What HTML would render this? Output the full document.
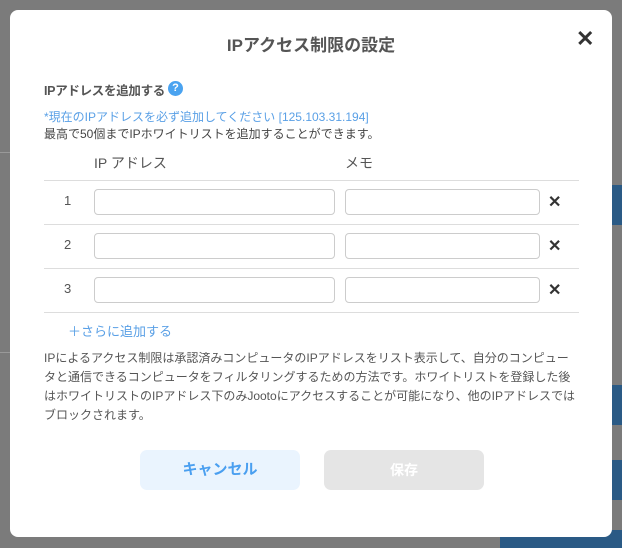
<!DOCTYPE html><html><head><meta charset="utf-8"><style>
body{margin:0;width:622px;height:548px;background:#7b7b7b;position:relative;overflow:hidden;font-family:"Liberation Sans","Noto Sans CJK JP",sans-serif;}
.a{position:absolute}
.m{left:10px;top:10px;width:602px;height:527px;background:#fff;border-radius:8px}
.t{font-size:13px;color:#555}
.line{left:44px;width:535px;height:1px;background:#ddd}
.in{height:24px;border:1px solid #ccc;border-radius:4px;background:#fff}
.x{font-size:16px;color:#333;font-weight:bold}
</style></head><body>
<div class="a" style="left:612px;top:185px;width:10px;height:40px;background:#2a5a85"></div>
<div class="a" style="left:612px;top:385px;width:10px;height:40px;background:#2a5a85"></div>
<div class="a" style="left:612px;top:460px;width:10px;height:40px;background:#2a5a85"></div>
<div class="a" style="left:500px;top:530px;width:122px;height:18px;background:#2a5a85"></div>
<div class="a" style="left:0;top:152px;width:10px;height:1px;background:#999"></div>
<div class="a" style="left:0;top:352px;width:10px;height:1px;background:#999"></div>
<div class="a m"></div>
<div class="a" style="left:0;top:31px;width:622px;text-align:center;font-size:17px;font-weight:bold;color:#555">IPアクセス制限の設定</div>
<div class="a" style="left:576px;top:26px;font-size:22px;color:#333;font-weight:bold">✕</div>
<div class="a t" style="left:44px;top:80px;font-weight:bold;font-size:12.5px;letter-spacing:-0.3px">IPアドレスを追加する</div>
<div class="a" style="left:168px;top:81px;width:15px;height:15px;border-radius:50%;background:#4aa3f0;color:#fff;font-size:11px;font-weight:bold;text-align:center;line-height:15px">?</div>
<div class="a" style="left:44px;top:108px;font-size:12px;color:#5aa0e6">*現在のIPアドレスを必ず追加してください [125.103.31.194]</div>
<div class="a" style="left:44px;top:125px;font-size:12px;color:#444">最高で50個までIPホワイトリストを追加することができます。</div>
<div class="a t" style="left:94px;top:153px;font-size:14px">IP アドレス</div>
<div class="a t" style="left:345px;top:153px;font-size:14px">メモ</div>
<div class="a line" style="top:180px"></div>
<div class="a line" style="top:224px"></div>
<div class="a line" style="top:268px"></div>
<div class="a line" style="top:312px"></div>
<div class="a t" style="left:64px;top:193px">1</div>
<div class="a t" style="left:64px;top:237px">2</div>
<div class="a t" style="left:64px;top:281px">3</div>
<div class="a in" style="left:94px;top:189px;width:239px"></div>
<div class="a in" style="left:345px;top:189px;width:193px"></div>
<div class="a in" style="left:94px;top:233px;width:239px"></div>
<div class="a in" style="left:345px;top:233px;width:193px"></div>
<div class="a in" style="left:94px;top:277px;width:239px"></div>
<div class="a in" style="left:345px;top:277px;width:193px"></div>
<div class="a x" style="left:548px;top:192px">✕</div>
<div class="a x" style="left:548px;top:236px">✕</div>
<div class="a x" style="left:548px;top:280px">✕</div>
<div class="a" style="left:68px;top:321px;font-size:13px;color:#5aa0e6">＋さらに追加する</div>
<div class="a" style="left:44px;top:349px;white-space:nowrap;font-size:12px;line-height:19px;color:#555">IPによるアクセス制限は承認済みコンピュータのIPアドレスをリスト表示して、自分のコンピュー<br>タと通信できるコンピュータをフィルタリングするための方法です。ホワイトリストを登録した後<br>はホワイトリストのIPアドレス下のみJootoにアクセスすることが可能になり、他のIPアドレスでは<br>ブロックされます。</div>
<div class="a" style="left:140px;top:450px;width:160px;height:40px;border-radius:7px;background:#eaf4fe;color:#4a9ff0;font-weight:bold;font-size:15px;text-align:center;line-height:40px">キャンセル</div>
<div class="a" style="left:324px;top:450px;width:160px;height:40px;border-radius:7px;background:#e5e5e5;color:#fff;font-weight:bold;font-size:14px;text-align:center;line-height:40px">保存</div>
</body></html>
